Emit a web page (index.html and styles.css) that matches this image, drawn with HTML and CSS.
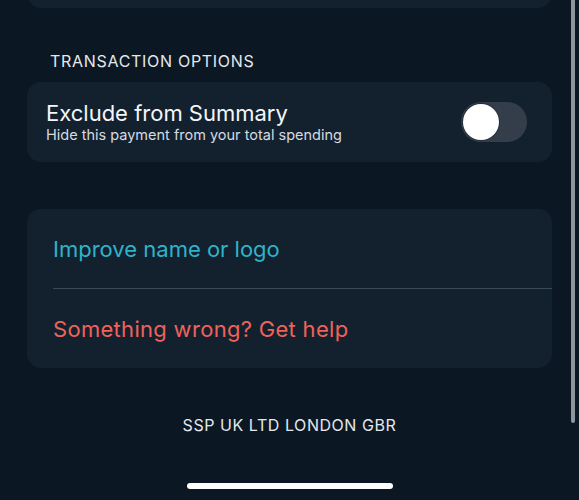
FILE: index.html
```html
<!DOCTYPE html>
<html lang="en">
<head>
<meta charset="utf-8">
<link rel="stylesheet" href="styles.css">
</head>
<body>
<div class="screen">
  <div class="card card-top"></div>

  <div class="section-label">TRANSACTION OPTIONS</div>

  <div class="card option">
    <div class="option-text">
      <div class="option-title">Exclude from Summary</div>
      <div class="option-sub">Hide this payment from your total spending</div>
    </div>
    <div class="toggle"><div class="knob"></div></div>
  </div>

  <div class="card actions">
    <div class="action action-blue">Improve name or logo</div>
    <div class="divider"></div>
    <div class="action action-red">Something wrong? Get help</div>
  </div>

  <div class="merchant">SSP UK LTD LONDON GBR</div>

  <div class="home-bar"></div>

  <div class="scrollbar"></div>
</div>
</body>
</html>
```
FILE: styles.css
```css
html, body {
  margin: 0;
  padding: 0;
  background: #0b1722;
}
.screen {
  position: relative;
  width: 579px;
  height: 500px;
  overflow: hidden;
  background: #0b1722;
  font-family: Inter, "Noto Sans", sans-serif;
  color: #ffffff;
  display: flex;
  flex-direction: column;
}
.card {
  background: #13212f;
  border-radius: 14px;
  margin: 0 27px;
}
.card-top {
  height: 60px;
  margin-top: -52px;
  flex-shrink: 0;
}
.section-label {
  margin: 42px 0 0 50px;
  font-size: 16px;
  line-height: 22px;
  letter-spacing: 0.7px;
  color: #e4e8ec;
}
.option {
  margin-top: 10px;
  height: 80px;
  flex-shrink: 0;
  box-sizing: border-box;
  padding: 0 25px 0 19px;
  display: flex;
  align-items: center;
  justify-content: space-between;
}
.option-title {
  font-size: 22px;
  line-height: 26px;
  color: #f4f6f8;
}
.option-sub {
  font-size: 14.5px;
  line-height: 18px;
  color: #d6dbe0;
}
.toggle {
  width: 66px;
  height: 40px;
  border-radius: 20px;
  background: #343e4b;
  box-sizing: border-box;
  padding: 2px;
  display: flex;
  align-items: center;
}
.knob {
  width: 36px;
  height: 36px;
  border-radius: 50%;
  background: #ffffff;
  box-shadow: 0 0 0 1px rgba(0, 0, 0, 0.25);
}
.actions {
  margin-top: 47px;
  padding-left: 26px;
  display: flex;
  flex-direction: column;
  flex-shrink: 0;
}
.action {
  height: 79px;
  display: flex;
  align-items: center;
  font-size: 22px;
}
.action-blue { color: #2fb3c9; }
.action-red {
  color: #f0625a;
  letter-spacing: 0.3px;
}
.divider {
  height: 1px;
  background: #3a4a57;
}
.merchant {
  margin-top: 47px;
  text-align: center;
  font-size: 16px;
  line-height: 20px;
  letter-spacing: 0.55px;
  color: #e4e8ec;
}
.home-bar {
  align-self: center;
  margin-top: 48px;
  width: 206px;
  height: 6px;
  border-radius: 3px;
  background: #ffffff;
  flex-shrink: 0;
}
.scrollbar {
  position: absolute;
  top: 0;
  left: 571px;
  width: 4px;
  height: 423px;
  border-radius: 0 0 2px 2px;
  background: #8e969d;
}
```
